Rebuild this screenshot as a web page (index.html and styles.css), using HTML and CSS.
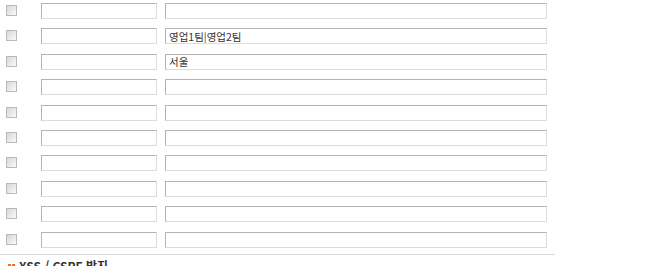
FILE: index.html
```html
<!DOCTYPE html>
<html lang="ko">
<head>
<meta charset="utf-8">
<link rel="stylesheet" href="styles.css">
</head>
<body>
<div class="list">
  <div class="row"><span class="chk"></span><input class="f1" type="text"><input class="f2" type="text"></div>
  <div class="row"><span class="chk"></span><input class="f1" type="text"><input class="f2" type="text" value="영업1팀|영업2팀"></div>
  <div class="row"><span class="chk"></span><input class="f1" type="text"><input class="f2" type="text" value="서울"></div>
  <div class="row"><span class="chk"></span><input class="f1" type="text"><input class="f2" type="text"></div>
  <div class="row"><span class="chk"></span><input class="f1" type="text"><input class="f2" type="text"></div>
  <div class="row"><span class="chk"></span><input class="f1" type="text"><input class="f2" type="text"></div>
  <div class="row"><span class="chk"></span><input class="f1" type="text"><input class="f2" type="text"></div>
  <div class="row"><span class="chk"></span><input class="f1" type="text"><input class="f2" type="text"></div>
  <div class="row"><span class="chk"></span><input class="f1" type="text"><input class="f2" type="text"></div>
  <div class="row"><span class="chk"></span><input class="f1" type="text"><input class="f2" type="text"></div>
</div>
<div class="sep"></div>
<div class="title"><span class="bullet"><i></i><i></i></span>XSS / CSRF 방지</div>
</body>
</html>
```
FILE: styles.css
```css
html, body {
  margin: 0;
  padding: 0;
  background: #fff;
  overflow: hidden;
  font-family: "Noto Sans CJK KR", "DejaVu Sans", sans-serif;
}
.list {
  width: 555px;
}
.row {
  height: 25.4px;
  display: flex;
  align-items: flex-start;
  box-sizing: border-box;
}
.chk {
  display: block;
  width: 9px;
  height: 9px;
  margin: 5px 0 0 6px;
  border: 1px solid #b9b9b9;
  background: linear-gradient(135deg, #d8d8d8 0%, #f2f2f2 80%, #ffffff 100%);
}
input {
  display: block;
  box-sizing: border-box;
  height: 16px;
  margin: 3px 0 0 0;
  padding: 0 3px;
  border-style: solid;
  border-width: 1px;
  border-color: #b4b4b4 #dcdcdc #dcdcdc #b4b4b4;
  background: #fff;
  font-family: "Noto Sans CJK KR", "DejaVu Sans", sans-serif;
  font-size: 10.5px;
  line-height: 14px;
  color: #333;
  outline: none;
}
.f1 {
  width: 116px;
  margin-left: 24px;
}
.f2 {
  width: 382px;
  margin-left: 8px;
}
.sep {
  width: 555px;
  height: 1px;
  background: #dadada;
}
.title {
  margin: 4px 0 0 8px;
  display: flex;
  align-items: center;
  font-size: 12px;
  font-weight: bold;
  color: #333;
  line-height: 14px;
}
.bullet {
  display: flex;
  gap: 1px;
  margin-right: 4px;
}
.bullet i {
  display: block;
  width: 3px;
  height: 3px;
  background: #e8742a;
}
```
